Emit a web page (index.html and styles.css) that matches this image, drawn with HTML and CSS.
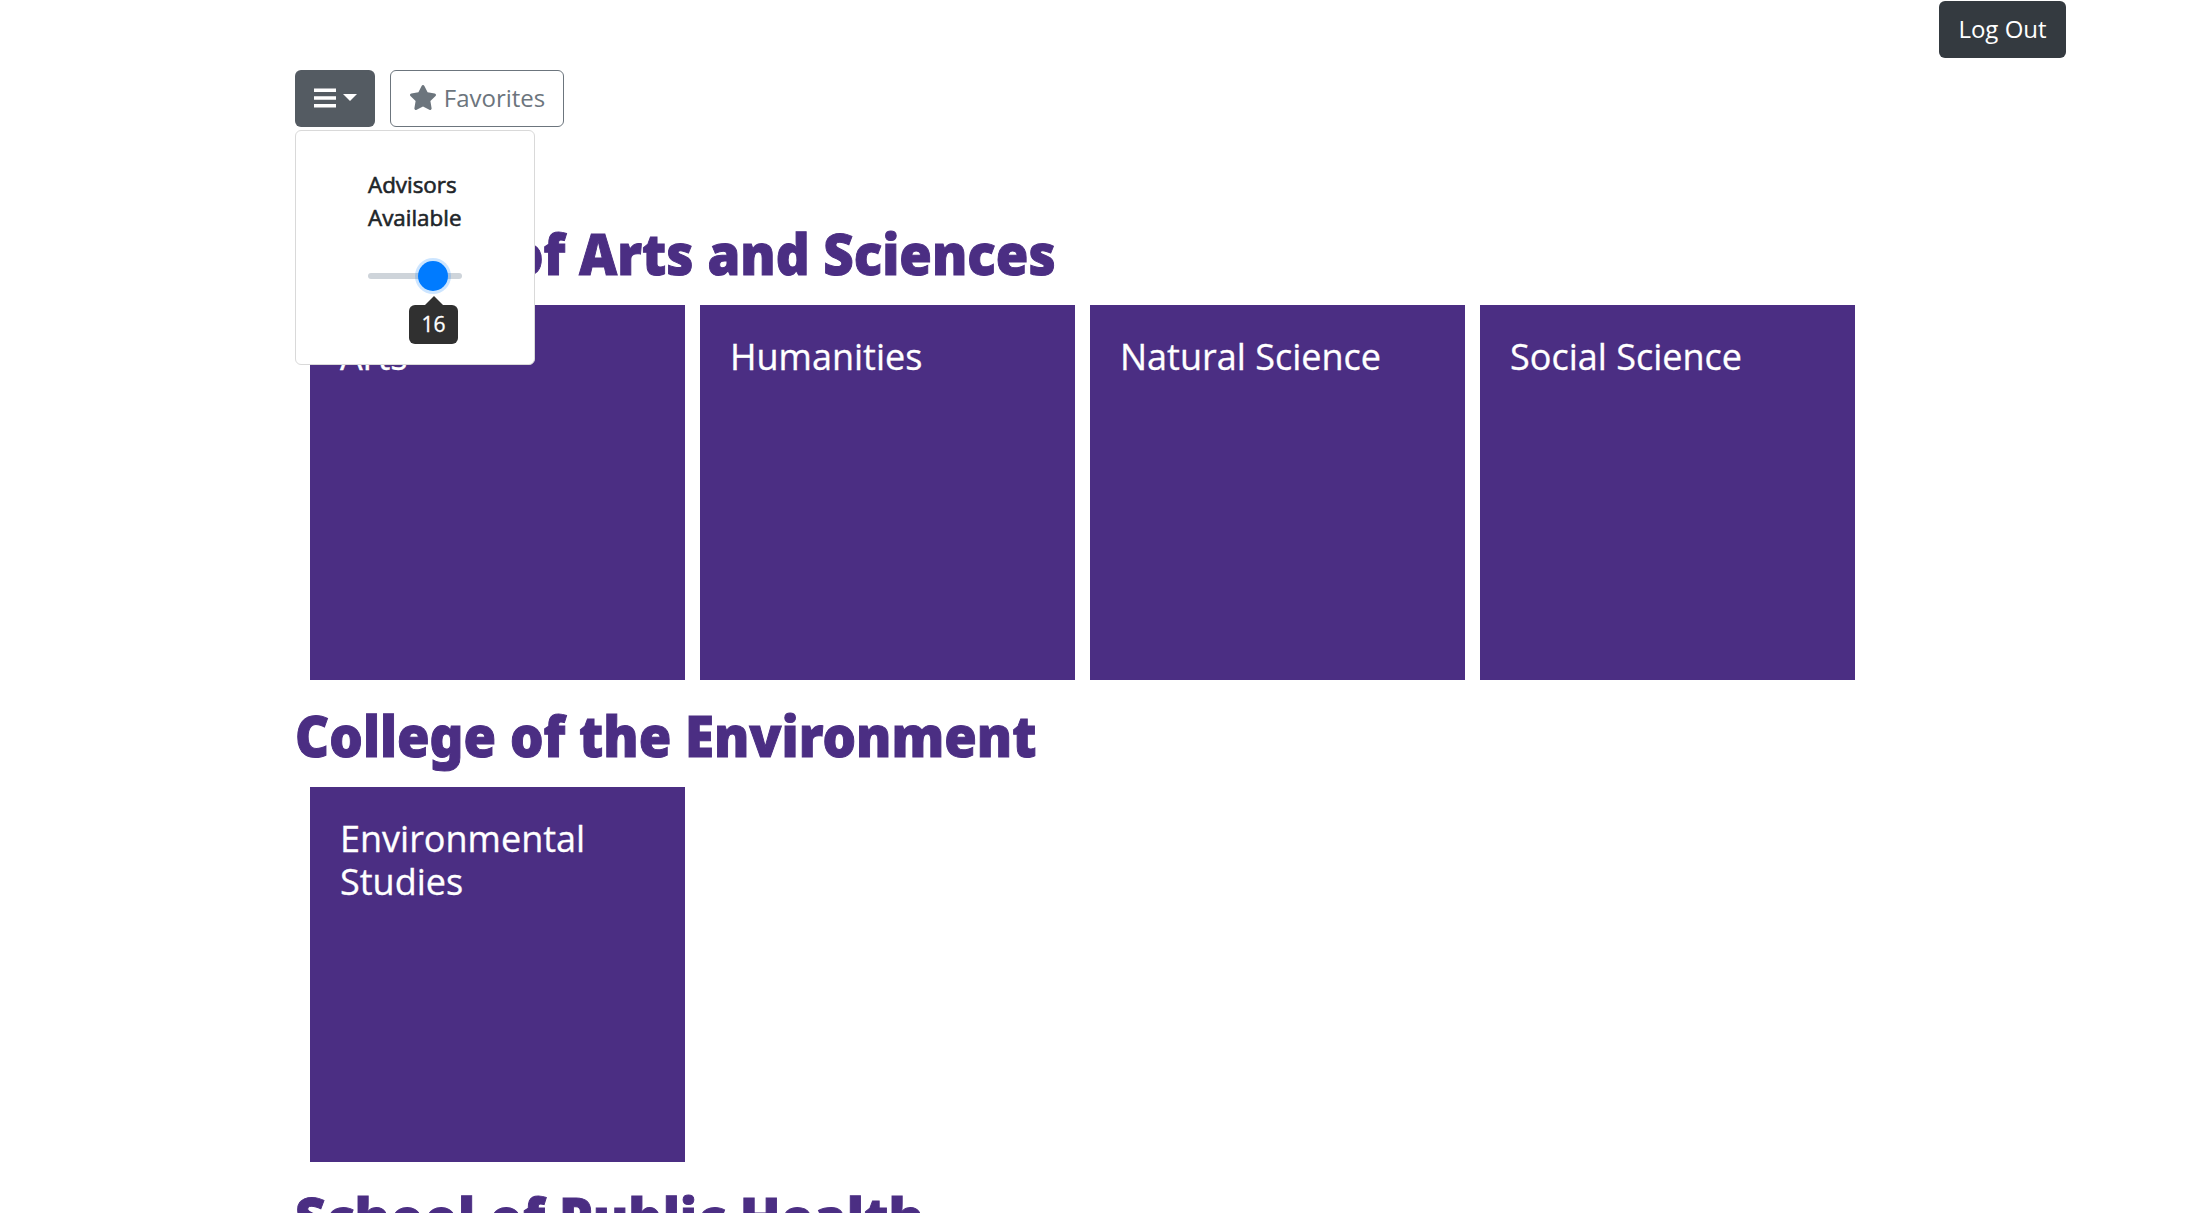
FILE: index.html
```html
<!DOCTYPE html>
<html lang="en">
<head>
<meta charset="utf-8">
<title>Advising</title>
<link rel="stylesheet" href="styles.css">
</head>
<body>
<header class="topbar"><button class="btn btn-dark">Log Out</button></header>
<main class="container">
  <nav class="toolbar">
    <div class="dropdown">
      <button class="btn btn-menu" aria-label="Menu">
        <svg class="bars" viewBox="0 0 22 20"><path d="M0 0.500h22v3.500H0zM0 8.200h22v3.500H0zM0 16h22v3.500H0z"/></svg>
        <span class="caret"></span>
      </button>
      <div class="menu">
        <p class="menu-label">Advisors Available</p>
        <div class="slider">
          <div class="handle"><span class="tip">16</span></div>
        </div>
      </div>
    </div>
    <button class="btn btn-outline">
      <svg class="star" viewBox="0 0 576 512"><path d="M259.3 17.8L194 150.200 47.900 171.500c-26.200 3.800-36.700 36.100-17.700 54.600l105.700 103-25 145.500c-4.500 26.300 23.200 46 46.400 33.700L288 439.600l130.700 68.700c23.200 12.200 50.900-7.400 46.400-33.700l-25-145.500 105.700-103c19-18.500 8.500-50.800-17.700-54.600L382 150.200 316.700 17.800c-11.700-23.600-45.600-23.900-57.400 0z"/></svg>
      <span>Favorites</span>
    </button>
  </nav>
  <section>
    <h1>College of Arts and Sciences</h1>
    <div class="cards">
      <a class="card">Arts</a>
      <a class="card">Humanities</a>
      <a class="card">Natural Science</a>
      <a class="card">Social Science</a>
    </div>
  </section>
  <section>
    <h1>College of the Environment</h1>
    <div class="cards"><a class="card">Environmental Studies</a></div>
  </section>
  <section>
    <h1 class="wide">School of Public Health</h1>
  </section>
</main>
</body>
</html>
```
FILE: styles.css
```css
* { box-sizing: border-box; }
html, body { height: 100%; }
body { margin: 0; overflow: hidden; background: #fff; color: #212529; font: 24px/36px "Open Sans", sans-serif; }
.topbar { display: flex; justify-content: flex-end; height: 70px; padding: 1px 124px 0 0; }
.btn { display: flex; align-items: center; justify-content: center; height: 57px; margin: 0; padding: 0 0 2px; border: 1px solid transparent; border-radius: 6px; font: inherit; white-space: nowrap; }
.btn-dark { width: 127px; background: #343a40; color: #fff; }
.container { width: 1580px; margin-left: 295px; }
.toolbar { display: flex; gap: 15px; height: 145px; }
.dropdown { position: relative; }
.btn-menu { width: 80px; gap: 7px; background: #545b62; color: #fff; }
.bars { width: 22px; height: 20px; fill: #fff; }
.caret { margin-bottom: 1px; border: 7px solid transparent; border-top-color: #fff; border-bottom: 0; }
.btn-outline { width: 174px; gap: 7px; border-color: #6c757d; background: #fff; color: #6c757d; }
.star { width: 28px; height: 25px; fill: #6c757d; }
.menu { position: absolute; z-index: 2; top: 60px; left: 0; width: 240px; height: 235px; padding: 37px 72px 0; border: 1px solid #d9d9d9; border-radius: 6px; background: #fff; }
.menu-label { margin: 0; font-size: 22.4px; line-height: 33px; -webkit-text-stroke: .6px #212529; }
.slider { position: relative; width: 94px; height: 6px; margin-top: 39px; border-radius: 3px; background: #ced4da; }
.handle { position: absolute; top: -12px; left: 50px; width: 30px; height: 30px; border-radius: 50%; background: #007bff; box-shadow: 0 0 0 3px rgba(0, 123, 255, .2); }
.tip { position: absolute; top: 44px; left: -9px; width: 49px; height: 39px; border-radius: 6px; background: #303030; color: #fff; font-size: 21px; line-height: 39px; text-align: center; -webkit-text-stroke: .3px #fff; }
.tip::before { content: ""; position: absolute; left: 15px; top: -9px; border: 10px solid transparent; border-top: 0; border-bottom-color: #303030; }
h1 { height: 90px; margin: 0; padding-top: 2px; font: 900 57px/72px "Noto Sans", sans-serif; color: #4b2e83; white-space: nowrap; transform: scaleX(.926); transform-origin: left; -webkit-text-stroke: 1px #4b2e83; }
.wide { transform: scaleX(.935); }
section { height: 482px; }
.cards { display: flex; gap: 15px; padding-left: 15px; }
.card { width: 375px; height: 375px; padding: 30px; background: #4b2e83; color: #fff; font-size: 36px; line-height: 43.2px; -webkit-text-stroke: .3px #fff; }
```
